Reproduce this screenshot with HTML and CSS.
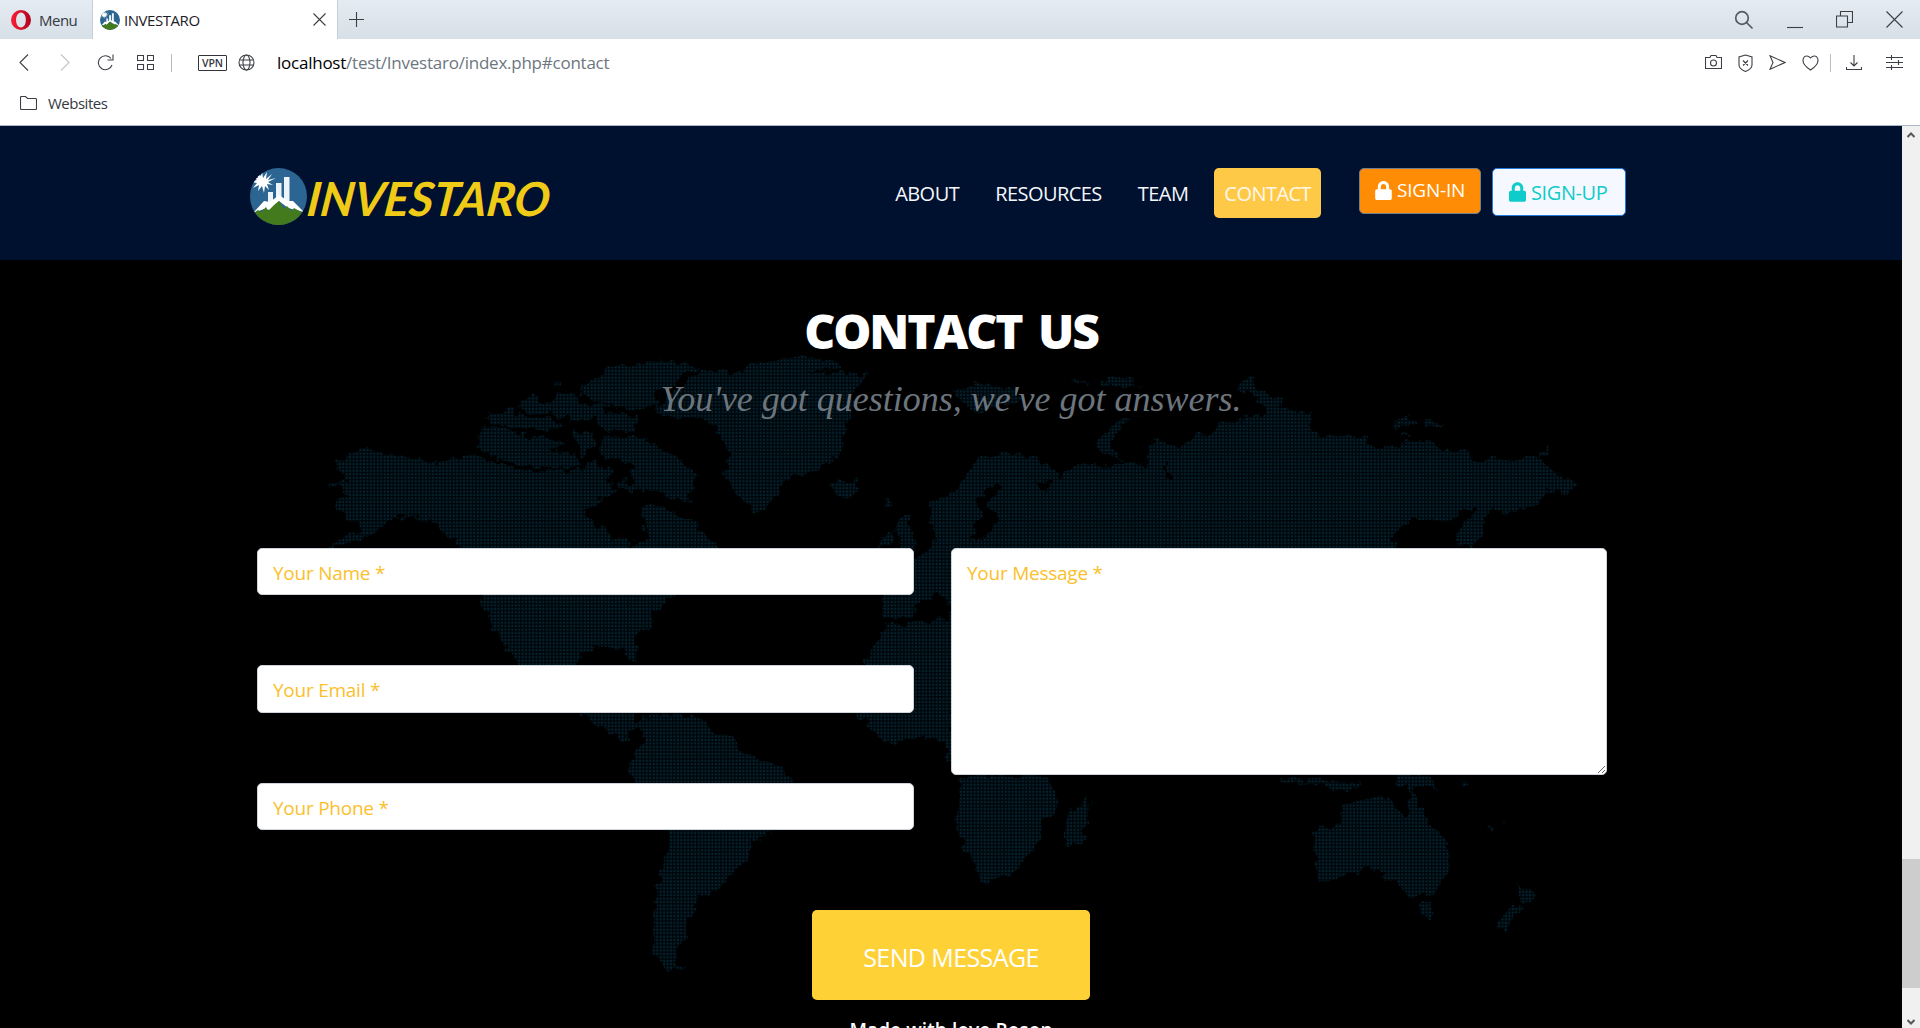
FILE: index.html
```html
<!DOCTYPE html>
<html lang="en">
<head>
<meta charset="utf-8">
<title>INVESTARO</title>
<link rel="stylesheet" href="styles.css">
</head>
<body>
<svg width="0" height="0" class="defs" aria-hidden="true">
  <symbol id="emblem" viewBox="0 0 57 57">
    <clipPath id="disc"><circle cx="28.500" cy="28.500" r="28.500"/></clipPath>
    <g clip-path="url(#disc)">
      <rect width="57" height="57" fill="#2c6591"/>
      <path d="M12 3l1 7 4-6-1 7 6-5-4 6 8-2-8 4 5 3-6-1 2 6-4-4-1 7-2-7-4 5 1-6-6 3 4-5-7-1 7-2-5-4 6 2-2-6 5 4z" fill="#fff"/>
      <path d="M18 24h5v12h-5zM26 15h5.500v18H26zM34 9h5.500v25H34z" fill="#eef4fb"/>
      <path d="M3 45L14 33 20 34 29 27 38 33 43 33 54 44 46 42 38 40 29 33 20 42 14 41z" fill="#fff"/>
      <path d="M2 46L8 42 11 44 16 39 18 43 24 37 29 33 34 41 37 38 42 43 44 40 55 46V57H2z" fill="#437a1d"/>
    </g>
  </symbol>
  <symbol id="lock" viewBox="0 0 448 512"><path fill="currentColor" d="M400 224h-24v-72C376 68 308 0 224 0S72 68 72 152v72H48c-26 0-48 22-48 48v192c0 26 22 48 48 48h352c26 0 48-22 48-48V272c0-26-22-48-48-48zm-104 0H152v-72c0-40 32-72 72-72s72 32 72 72z"/></symbol>
</svg>

<header class="browser">
  <div class="tabbar">
    <div class="menu">
      <svg width="20" height="24" viewBox="0 0 20 24"><defs><linearGradient id="op"><stop offset="0" stop-color="#fa1e37"/><stop offset="1" stop-color="#b0041c"/></linearGradient></defs><path fill="url(#op)" fill-rule="evenodd" d="M10 2a10 10 0 1 1 0 20A10 10 0 1 1 10 2zM10 4.500C3.500 4.500 3.500 19.500 10 19.500S16.500 4.500 10 4.500z"/></svg>
      <span>Menu</span>
    </div>
    <div class="tab">
      <svg width="20" height="20"><use href="#emblem"/></svg>
      <span>INVESTARO</span>
      <svg class="tab-close" width="13" height="13" viewBox="0 0 13 13"><path d="M.5.500l12 12M12.500.500l-12 12"/></svg>
    </div>
    <svg class="plus" width="15" height="15" viewBox="0 0 15 15"><path d="M7.500 0v15M0 7.500h15"/></svg>
    <div class="window-buttons">
      <svg width="20" height="20" viewBox="0 0 20 20"><circle cx="8" cy="8" r="6.300"/><path d="M12.500 12.500l6 6"/></svg>
      <svg width="16" height="20" viewBox="0 0 16 20"><path d="M0 17.500h16"/></svg>
      <svg width="17" height="17" viewBox="0 0 17 17"><path d="M.5 5h11v11H.5zM4.500 5V.500h12v11h-5"/></svg>
      <svg width="17" height="17" viewBox="0 0 17 17"><path d="M.5.500l16 16M16.500.500l-16 16"/></svg>
    </div>
  </div>
  <div class="toolbar">
    <svg class="back" width="10" height="17" viewBox="0 0 10 17"><path d="M9 .5L1 8.500l8 8"/></svg>
    <svg class="forward" width="10" height="17" viewBox="0 0 10 17"><path d="M1 .5l8 8-8 8"/></svg>
    <svg class="reload" width="17" height="17" viewBox="0 0 17 17"><path d="M15 11A7 7 0 1 1 14 4.500M16 .5V6h-5.500"/></svg>
    <svg class="grid" width="17" height="16" viewBox="0 0 17 16"><path d="M.5.500h6v5h-6zM10.500.500h6v5h-6zM.5 9.500h6v5h-6zM10.500 9.500h6v5h-6z"/></svg>
    <i class="bar"></i>
    <b class="vpn">VPN</b>
    <svg class="globe" width="17" height="17" viewBox="0 0 17 17"><circle cx="8.500" cy="8.500" r="7.500"/><ellipse cx="8.500" cy="8.500" rx="3.500" ry="7.500"/><path d="M1.500 6h14M1.500 11h14"/></svg>
    <span class="url">localhost<em>/test/Investaro/index.php#contact</em></span>
    <div class="tools">
      <svg width="17" height="17" viewBox="0 0 17 17"><path d="M.5 3.500H5l1-2h5l1 2h4.500v11H.5z"/><circle cx="8.500" cy="9" r="3"/></svg>
      <svg width="15" height="18" viewBox="0 0 15 18"><path d="M7.500 1l6.500 2v8c0 3-3 5-6.500 6.500C4 16 1 14 1 11V3zM5 6.500l5 5M10 6.500l-5 5"/></svg>
      <svg width="17" height="15" viewBox="0 0 17 15"><path d="M1 .7l15 6.800-15 6.800 3-6.800z"/></svg>
      <svg width="17" height="16" viewBox="0 0 17 16"><path d="M8.500 15C-5 6 3-3 8.500 3 14-3 22 6 8.500 15z"/></svg>
      <i class="bar"></i>
      <svg class="download" width="16" height="16" viewBox="0 0 16 16"><path d="M8 0v11M4.500 7.500L8 11l3.500-3.500M.5 12v2.500h15V12"/></svg>
      <svg width="17" height="15" viewBox="0 0 17 15"><path d="M0 2.500h17M0 7.500h17M0 12.500h17M5.500 0v5M12.500 5v5M5.500 10v5"/></svg>
    </div>
  </div>
  <div class="bookmarks">
    <svg width="17" height="14" viewBox="0 0 17 14"><path d="M.5 1.500q0-1 1-1h4l2 2h8q1 0 1 1v9q0 1-1 1h-14q-1 0-1-1z"/></svg>
    <span>Websites</span>
  </div>
</header>

<div class="viewport">
  <div class="page">
    <nav class="navbar">
      <a class="brand"><svg width="57" height="57"><use href="#emblem"/></svg><span>INVESTARO</span></a>
      <div class="links">
        <a>ABOUT</a><a>RESOURCES</a><a>TEAM</a><a class="active">CONTACT</a>
      </div>
      <a class="btn signin"><svg width="17" height="19"><use href="#lock"/></svg><span>SIGN-IN</span></a>
      <a class="btn signup"><svg width="17" height="20"><use href="#lock"/></svg><span>SIGN-UP</span></a>
    </nav>
    <section class="contact">
      <svg class="map" width="1902" height="768" viewBox="0 260 1902 768" aria-hidden="true">
        <defs>
          <pattern id="dots" width="3.450" height="3.450" patternUnits="userSpaceOnUse"><rect width="3.450" height="3.450" fill="#00070b"/><rect x=".7" y=".7" width="1.900" height="1.900" fill="#052431"/></pattern>
          <filter id="coast" filterUnits="userSpaceOnUse" x="0" y="260" width="1902" height="768">
            <feTurbulence type="fractalNoise" baseFrequency=".11" numOctaves="2" seed="4"/>
            <feDisplacementMap in="SourceGraphic" scale="14" xChannelSelector="R" yChannelSelector="G"/>
          </filter>
          <mask id="land" maskUnits="userSpaceOnUse" x="0" y="260" width="1902" height="768">
            <g filter="url(#coast)">
            <g fill="#fff" transform="translate(320 340) scale(.40816 .33333)">
              <path d="M35 375L80 338 120 330 200 350 285 370 350 348 400 350 460 385 530 397 580 388 640 395 650 360 690 375 720 395 700 420 730 450 690 470 645 520 680 560 720 590 762 602 765 622 800 600 790 500 830 485 850 510 880 530 920 550 940 590 980 625 960 690 860 770 810 830 808 860 770 890 778 970 760 960 740 925 690 920 640 935 630 975 640 1080 780 1100 750 1200 660 1140 560 1070 480 965 430 870 400 800 385 740 340 615 290 560 240 530 190 530 150 560 100 600 15 622 60 590 100 560 40 510 38 480 75 460 28 438 65 420z"/>
              <path d="M390 270L430 258 500 292 570 290 600 310 570 330 620 345 640 380 580 385 500 380 430 355 385 320zM408 220L470 200 480 225 560 235 600 258 560 270 470 265 410 240zM640 140L700 88 850 60 930 80 890 105 870 135 820 150 830 200 750 210 690 190 640 170zM480 190L520 170 550 190 620 155 640 185 700 195 700 220 780 225 770 270 690 268 680 240 620 240 560 220 500 215zM575 125l20 0 0 12-20 0zM620 280L660 275 680 320 640 350zM690 290L790 290 860 340 930 405 915 440 905 485 850 475 830 455 740 445 730 420 770 430 760 375 690 340zM790 390l25-10 15 20-25 15z"/>
              <path d="M880 140L940 90 1030 95 1070 68 1200 52 1280 70 1275 88 1195 90 1200 97 1350 100 1310 150 1300 230 1280 290 1270 350 1220 388 1160 410 1120 440 1095 520 1060 520 1015 460 990 400 1005 340 970 260 930 235 870 235 820 210z"/>
              <path d="M1250 420L1270 430 1315 422 1325 445 1290 470 1260 462zM1385 475h8v20h-8zM1415 540L1445 528 1452 625 1410 640 1430 600 1405 570zM1375 590L1400 572 1410 610 1368 622zM1375 765L1380 720 1430 700 1440 670 1500 625 1620 600V1100H1300L1340 960 1385 860 1440 850 1547 835 1545 775 1510 765 1460 800 1455 835 1380 835z"/>
            </g>
            <g fill="#fff" transform="translate(900 340) scale(.45918 .33333)">
              <path fill-rule="evenodd" d="M70 490L120 455 140 400 180 355 240 335 290 355 350 395 340 420 370 385 400 370 430 380 500 365 540 380 540 330 560 295 580 300 600 325 640 310 640 275 680 290 690 255 740 235 800 225 790 185 735 150 735 120 760 112 800 165 835 175 830 205 895 220 895 285 1010 290 1030 325 1090 320 1110 305 1160 310 1180 330 1230 335 1260 365 1310 350 1390 360 1430 400 1480 430 1450 460 1410 450 1390 490 1330 520 1290 510 1265 545 1275 580 1245 622 1215 615 1215 570 1260 512 1230 505 1200 545 1120 540 1090 570 1070 600 1080 640H60L80 600 70 560zM205 432L165 485 180 530 150 600 185 590 215 532 185 500 220 440zM290 425l30 30 20-30zM580 370v45h8v-45z"/>
              <path d="M370 122L410 125 410 140zM435 120L470 110 525 135 440 140zM118 150L165 132 235 138 270 180 160 215 130 190zM555 215L500 235 465 280 460 330 500 362 430 330 430 300 480 240zM1072 240L1120 235 1125 255 1080 262zM1145 245l30 5v12l-30-5zM1095 278h20v12h-20zM1390 330l25-5-5 20-20 10z"/>
            </g>
            <g fill="#fff" transform="translate(600 660) scale(.35714 .33333)">
              <path d="M38 168L100 185 150 160 270 170 320 215 370 225 400 280 440 292 500 315 545 360 540 430 485 520 430 535 400 610 350 665 310 708 270 710 268 755 230 790 242 830 210 865 215 915 245 928 180 925 148 880 150 790 160 690 190 560 195 510 150 440 80 340 95 280 125 240 120 210 60 200z"/>
              <path d="M740 0H984V300L975 312 970 240 900 232 820 248 790 240 720 160zM1000 345H1265L1270 380 1282 440 1230 490 1235 530 1190 600 1140 652 1060 668 1050 610 1020 560 993 470 1010 400zM1370 410V465L1350 552H1303L1310 460z"/>
            </g>
            <g fill="#fff" transform="translate(1160 740) scale(.33333)">
              <path d="M457 275L540 250V210L580 190 640 170H692V195L730 228 748 220V135H765L770 200 787 205 800 245 870 320V385L825 460 740 468 700 420 680 425 670 395 620 388 570 400 540 415 480 428 468 400V350L457 340zM710 105H805L840 155 805 140 765 135H710zM360 108L440 120 605 128 560 155 510 150 500 135 360 125zM780 490H817L805 532H790zM1070 420L1130 465 1105 498 1085 485zM1060 495L1088 505 1030 572 1005 560zM975 255L1015 265 1000 282zM900 125h22v10h-22zM1028 242h8v8h-8z"/>
            </g>
            </g>
          </mask>
        </defs>
        <rect y="260" width="1902" height="768" fill="url(#dots)" mask="url(#land)"/>
      </svg>
      <h2>CONTACT US</h2>
      <h3>You've got questions, we've got answers.</h3>
      <form>
        <div class="fields">
          <input placeholder="Your Name *">
          <input placeholder="Your Email *">
          <input placeholder="Your Phone *">
        </div>
        <textarea placeholder="Your Message *"></textarea>
      </form>
      <button class="send">SEND MESSAGE</button>
      <p class="credit">Made with love Roson</p>
    </section>
  </div>
  <div class="scrollbar">
    <svg width="8" height="6" viewBox="0 0 8 6"><path d="M.5 5L4 1.500 7.500 5"/></svg>
    <i></i>
    <svg width="8" height="6" viewBox="0 0 8 6"><path d="M.5 1L4 4.500 7.500 1"/></svg>
  </div>
</div>
</body>
</html>
```
FILE: styles.css
```css
* { box-sizing: border-box; }
body {
  margin: 0;
  height: 1028px;
  overflow: hidden;
  display: flex;
  flex-direction: column;
  font-family: "Open Sans", "Noto Sans", sans-serif;
  background: #fff;
}
.defs { position: absolute; }
svg { display: block; flex: none; }
span, a, button, h2, h3, p { white-space: nowrap; }

.browser { height: 126px; border-bottom: 1px solid #aab6c6; flex: none; color: #35393f; }
.tab-close, .plus, .window-buttons svg, .toolbar svg, .bookmarks svg {
  fill: none; stroke: #3c4046; stroke-width: 1.1;
}
.tabbar { height: 39px; display: flex; align-items: center; background: linear-gradient(#e4ebf3, #d7dfe7); }
.menu {
  width: 93px; height: 39px; padding: 1px 0 0 11px; display: flex; align-items: center; gap: 8px;
  font-size: 15px; letter-spacing: -.5px; border-right: 1px solid #c6ced8;
}
.tab {
  width: 245px; height: 39px; padding: 0 11px 0 7px; display: flex; align-items: center; gap: 4px;
  background: #fff; border-right: 1px solid #c6ced8; font-size: 15px; letter-spacing: -.45px; color: #1d2127;
}
.tab-close { margin-left: auto; }
.plus { margin-left: 11px; }
.window-buttons { margin-left: auto; padding-right: 17px; display: flex; align-items: center; gap: 33px; }
.window-buttons svg:first-child { stroke-width: 1.7; stroke: #555b63; }

.toolbar { height: 47px; display: flex; align-items: center; padding: 0 17px 0 19px; }
.forward { margin-left: 31px; opacity: .3; }
.reload { margin-left: 27px; }
.grid { margin-left: 23px; }
.bar { width: 1px; height: 18px; background: #b9bdc2; margin-left: 17px; }
.vpn {
  width: 29px; height: 16px; margin-left: 26px; border: 1px solid #30343a; border-radius: 1px;
  font-size: 10.5px; line-height: 14px; font-weight: 600; text-align: center;
}
.globe { margin-left: 11px; }
.url { margin-left: 22px; font-size: 17px; letter-spacing: -.24px; color: #000; }
.url em { font-style: normal; color: #6c7680; }
.tools { margin-left: auto; display: flex; align-items: center; gap: 16px; }
.tools .bar { margin-left: -5px; margin-right: -1px; }
.download { margin-right: 8px; }
.bookmarks { height: 34px; padding-left: 20px; display: flex; align-items: center; gap: 11px; font-size: 15px; letter-spacing: -.5px; }

.viewport { flex: 1; min-height: 0; display: flex; }
.page { flex: 1; min-width: 0; display: flex; flex-direction: column; overflow: hidden; }
.navbar {
  height: 134px; flex: none; padding: 42px 276px 0 250px; display: flex; align-items: flex-start;
  background: #00102f;
}
.brand { display: flex; align-items: center; color: #efcb18; }
.brand span {
  font-family: Lato, sans-serif; font-weight: 700; font-style: italic; font-size: 47px; line-height: 57px;
  letter-spacing: -.2px; transform: translate(1px, 2px) skewX(-7deg); transform-origin: left center;
}
.links { margin-left: auto; display: flex; gap: 16px; }
.links a {
  height: 50px; padding: 0 10px; border-radius: 5px; line-height: 52px; font-size: 20px;
  letter-spacing: -.55px; color: #f4f7fb;
}
.links .active { background: #ffc948; color: #fff8ea; }
.btn { display: flex; align-items: center; border-radius: 5px; font-size: 19px; letter-spacing: -.2px; border: 1px solid; }
.signin { width: 122px; height: 46px; margin-left: 38px; padding: 0 0 2px 15px; gap: 5px; background: #ff8c05; border-color: #6f7f8f; color: #fff; }
.signup { width: 134px; height: 48px; margin-left: 11px; padding-left: 16px; gap: 5px; background: #f6f8ff; border-color: #2379dc; color: #0fcbc9; font-size: 20px; letter-spacing: -.4px; }

.contact {
  position: relative; flex: 1; min-height: 0; background: #000; overflow: hidden;
  display: flex; flex-direction: column; align-items: center;
}
.map { position: absolute; left: 0; top: 0; }
h2, h3, form, .send, .credit { position: relative; margin: 0; flex: none; }
h2 { margin-top: 37px; height: 68px; line-height: 68px; font-size: 48px; font-weight: 800; letter-spacing: -2.1px; word-spacing: 6px; color: #fff; }
h3 {
  margin-top: 10px; height: 48px; line-height: 48px; color: #6c757d;
  font-family: "Liberation Serif", serif; font-style: italic; font-weight: 400; font-size: 36px;
}
form { width: 1350px; height: 282px; margin: 125px 38px 0 0; display: grid; grid-template-columns: 657px 656px; gap: 37px; }
.fields { display: flex; flex-direction: column; justify-content: space-between; }
input, textarea {
  display: block; width: 100%; border: 1px solid #ced4da; border-radius: 5px; background: #fff;
  padding: 2px 15px 0; font: 19px "Open Sans", sans-serif; letter-spacing: -.25px; outline: 0;
}
input { height: 47px; }
.fields input:nth-child(2) { height: 48px; }
textarea { height: 227px; padding-top: 11px; }
::placeholder { color: #fbbf2c; opacity: 1; }
.send {
  width: 278px; height: 90px; margin-top: 80px; padding: 4px 0 0; border: 0; border-radius: 5px; background: #fed136;
  color: #fff; font: 25px "Open Sans", sans-serif; letter-spacing: -.6px;
}
.credit { margin-top: 17px; color: #fff; font-weight: 600; font-size: 19px; letter-spacing: .1px; }

.scrollbar { width: 18px; flex: none; background: #f0f0f0; display: flex; flex-direction: column; align-items: center; padding: 6px 0 3px; }
.scrollbar svg { fill: none; stroke: #55585c; stroke-width: 2; }
.scrollbar i { width: 18px; height: 129px; margin-top: auto; margin-bottom: 31px; background: #cdcdcd; }
```
